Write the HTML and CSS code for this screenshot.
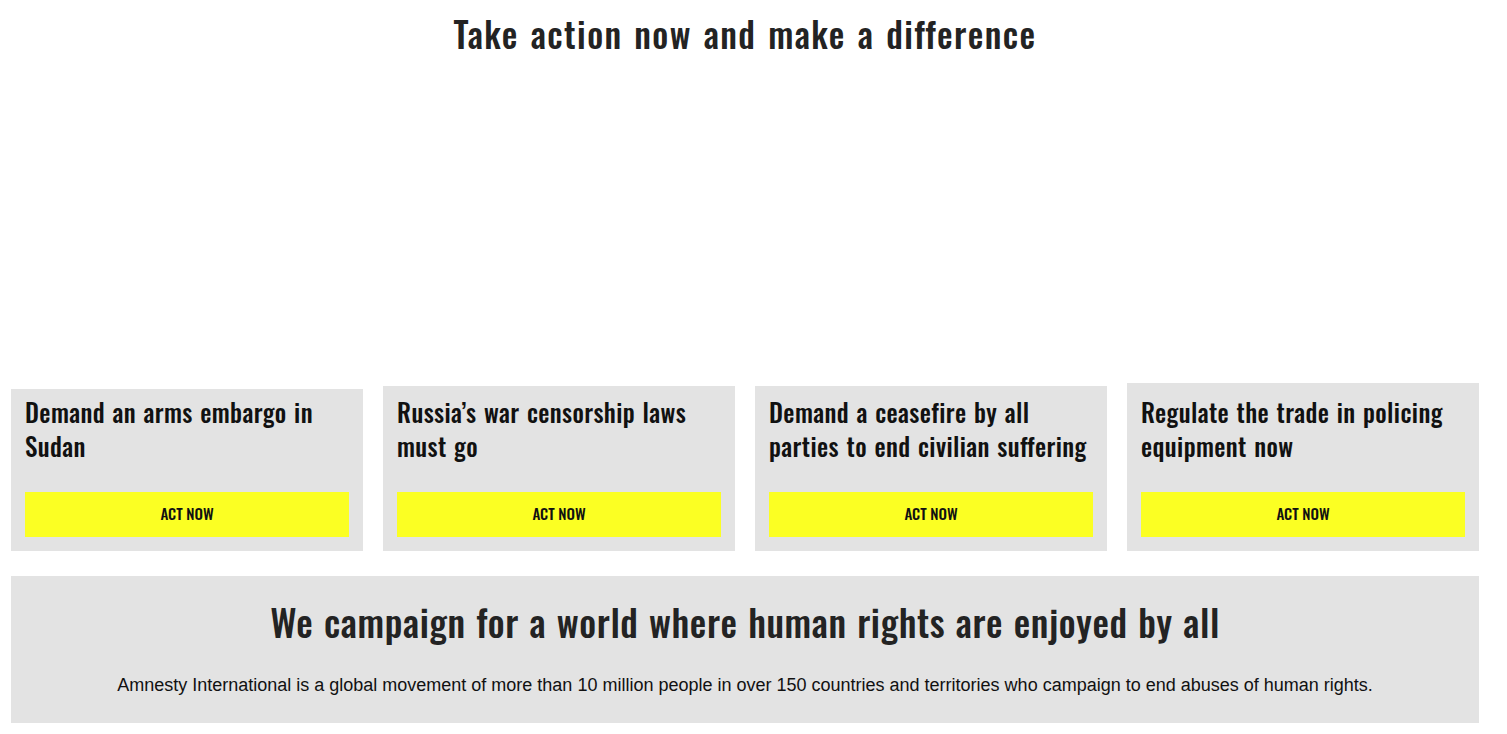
FILE: index.html
```html
<!DOCTYPE html>
<html lang="en">
<head>
<meta charset="utf-8">
<title>Take action now</title>
<link rel="stylesheet" href="styles.css">
</head>
<body>
<main class="page">
  <section class="actions">
    <h2 class="actions-title">Take action now and make a difference</h2>
    <div class="cards">
      <article class="card card-1">
        <h3 class="card-title">Demand an arms embargo in Sudan</h3>
        <a class="card-btn" href="#">ACT NOW</a>
      </article>
      <article class="card card-2">
        <h3 class="card-title">Russia’s war censorship laws must go</h3>
        <a class="card-btn" href="#">ACT NOW</a>
      </article>
      <article class="card card-3">
        <h3 class="card-title">Demand a ceasefire by all parties to end civilian suffering</h3>
        <a class="card-btn" href="#">ACT NOW</a>
      </article>
      <article class="card card-4">
        <h3 class="card-title">Regulate the trade in policing equipment now</h3>
        <a class="card-btn" href="#">ACT NOW</a>
      </article>
    </div>
  </section>
  <section class="mission">
    <h2 class="mission-title">We campaign for a world where human rights are enjoyed by all</h2>
    <p class="mission-text">Amnesty International is a global movement of more than 10 million people in over 150 countries and territories who campaign to end abuses of human rights.</p>
  </section>
</main>
</body>
</html>
```
FILE: styles.css
```css
* { box-sizing: border-box; }

body {
  margin: 0;
  background: #fff;
  color: #222;
  font-family: "Liberation Sans", Arial, sans-serif;
}

.page {
  padding: 0 28px 0 11px;
}

.actions-title {
  margin: 10px 0 0;
  text-align: center;
  font-family: "Oswald", "Roboto Condensed", sans-serif;
  font-weight: 500;
  font-size: 35px;
  line-height: 46px;
  letter-spacing: 1.4px;
  word-spacing: 2px;
  color: #232323;
}

.cards {
  margin-top: 327px;
  display: grid;
  grid-template-columns: repeat(4, 352px);
  gap: 20px;
  align-items: end;
}

.card {
  background: #e3e3e3;
  padding: 6px 14px 14px;
  display: flex;
  flex-direction: column;
}

.card-2, .card-3 { padding-top: 9px; }
.card-4 { padding-top: 12px; }

.card-title {
  margin: 0 0 29px;
  font-family: "Oswald", "Roboto Condensed", sans-serif;
  font-weight: 500;
  font-size: 25px;
  line-height: 34px;
  letter-spacing: 0.4px;
  word-spacing: 1px;
  color: #111;
}

.card-btn {
  display: flex;
  align-items: center;
  justify-content: center;
  height: 45px;
  padding-bottom: 3px;
  background: #fbff23;
  color: #111;
  text-decoration: none;
  font-family: "Oswald", "Roboto Condensed", sans-serif;
  font-weight: 500;
  font-size: 15px;
}

.mission {
  margin-top: 25px;
  width: 1468px;
  background: #e3e3e3;
  padding: 21px 20px 24px;
  text-align: center;
}

.mission-title {
  margin: 0 0 25px;
  font-family: "Oswald", "Roboto Condensed", sans-serif;
  font-weight: 500;
  font-size: 37px;
  line-height: 50px;
  letter-spacing: 0.6px;
  word-spacing: 1px;
  color: #232323;
}

.mission-text {
  margin: 0;
  font-size: 18px;
  line-height: 27px;
  color: #111;
}
```
